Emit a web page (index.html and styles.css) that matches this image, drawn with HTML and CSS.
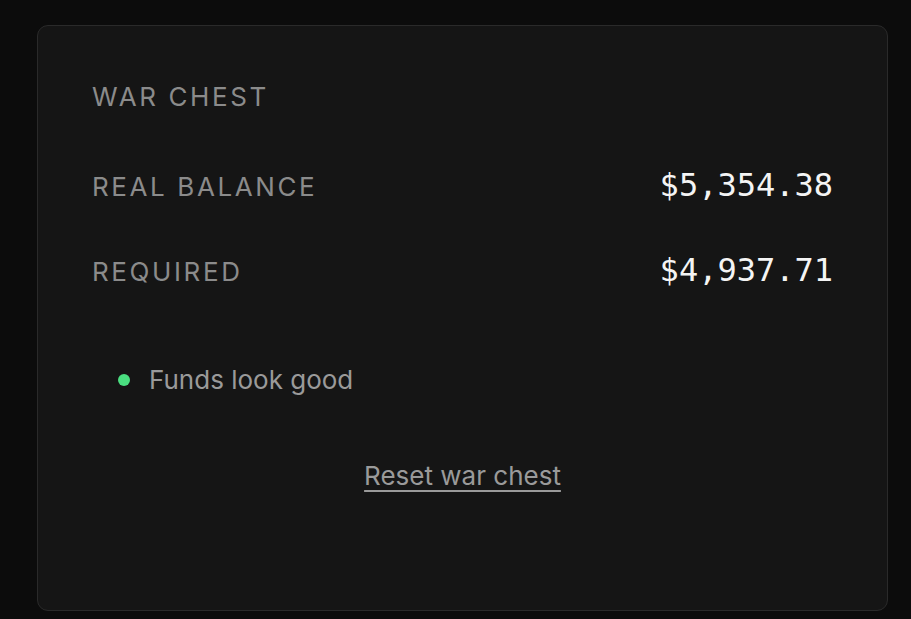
FILE: index.html
```html
<!DOCTYPE html>
<html lang="en">
<head>
<meta charset="utf-8">
<title>War chest</title>
<link rel="stylesheet" href="styles.css">
</head>
<body>
<main class="page">
  <section class="card">
    <h2 class="title">War chest</h2>
    <div class="row">
      <span class="label">Real balance</span>
      <span class="amount">$5,354.38</span>
    </div>
    <div class="row row-second">
      <span class="label">Required</span>
      <span class="amount">$4,937.71</span>
    </div>
    <p class="status"><span class="dot"></span>Funds look good</p>
    <div class="actions"><a class="reset" href="#">Reset war chest</a></div>
  </section>
</main>
</body>
</html>
```
FILE: styles.css
```css
* { box-sizing: border-box; }

html, body {
  margin: 0;
  background: #0c0c0c;
}

body {
  font-family: Inter, "Noto Sans", sans-serif;
}

.page {
  padding: 25px 23px 8px 37px;
}

.card {
  height: 586px;
  background: #151515;
  border: 1px solid #2a2a2a;
  border-radius: 11px;
  padding: 55px 54px 0 54px;
}

.title {
  margin: 0;
  font-size: 26px;
  line-height: 32px;
  font-weight: 400;
  letter-spacing: 0.1em;
  text-transform: uppercase;
  color: #8b8b8b;
}

.row {
  display: flex;
  justify-content: space-between;
  align-items: baseline;
  height: 32px;
  margin-top: 56px;
}

.row-second {
  margin-top: 53px;
}

.label {
  font-size: 26px;
  line-height: 32px;
  letter-spacing: 0.1em;
  text-transform: uppercase;
  color: #8b8b8b;
}

.amount {
  font-family: "DejaVu Sans Mono", "Liberation Mono", monospace;
  font-size: 32px;
  line-height: 32px;
  color: #f4f4f4;
}

.status {
  display: flex;
  align-items: center;
  gap: 19px;
  margin: 78px 0 0 26px;
  font-size: 26px;
  line-height: 32px;
  color: #9a9a9a;
}

.dot {
  width: 12px;
  height: 12px;
  border-radius: 50%;
  background: #4ade80;
}

.actions {
  margin-top: 64px;
  text-align: center;
}

.reset {
  font-size: 26px;
  line-height: 32px;
  color: #9a9a9a;
  text-decoration: underline;
  text-underline-offset: 5px;
  text-decoration-thickness: 2px;
}
```
